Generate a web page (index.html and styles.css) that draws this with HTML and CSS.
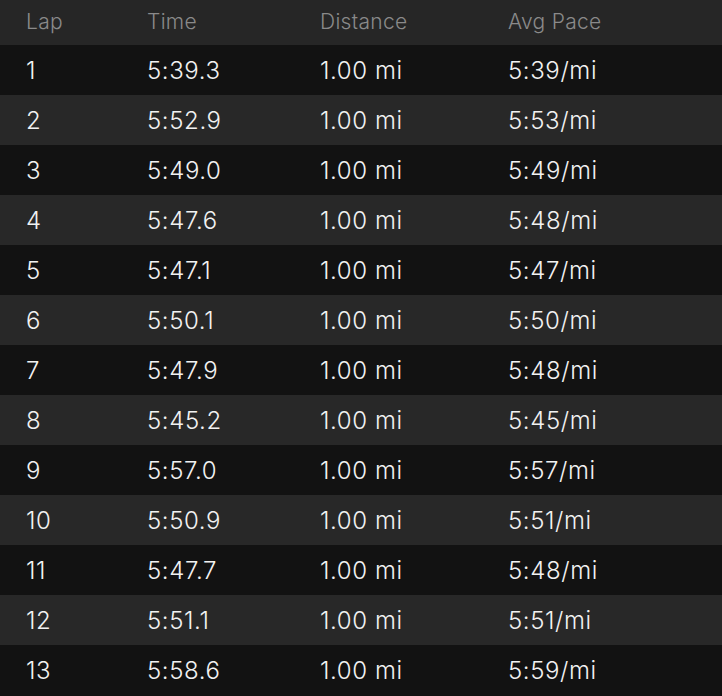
FILE: index.html
```html
<!DOCTYPE html>
<html>
<head>
<meta charset="utf-8">
<link rel="stylesheet" href="styles.css">
</head>
<body>
<div class="table">
  <div class="row head"><span>Lap</span><span>Time</span><span>Distance</span><span>Avg Pace</span></div>
  <div class="row odd"><span>1</span><span>5:39.3</span><span>1.00 mi</span><span>5:39/mi</span></div>
  <div class="row even"><span>2</span><span>5:52.9</span><span>1.00 mi</span><span>5:53/mi</span></div>
  <div class="row odd"><span>3</span><span>5:49.0</span><span>1.00 mi</span><span>5:49/mi</span></div>
  <div class="row even"><span>4</span><span>5:47.6</span><span>1.00 mi</span><span>5:48/mi</span></div>
  <div class="row odd"><span>5</span><span>5:47.1</span><span>1.00 mi</span><span>5:47/mi</span></div>
  <div class="row even"><span>6</span><span>5:50.1</span><span>1.00 mi</span><span>5:50/mi</span></div>
  <div class="row odd"><span>7</span><span>5:47.9</span><span>1.00 mi</span><span>5:48/mi</span></div>
  <div class="row even"><span>8</span><span>5:45.2</span><span>1.00 mi</span><span>5:45/mi</span></div>
  <div class="row odd"><span>9</span><span>5:57.0</span><span>1.00 mi</span><span>5:57/mi</span></div>
  <div class="row even"><span>10</span><span>5:50.9</span><span>1.00 mi</span><span>5:51/mi</span></div>
  <div class="row odd"><span>11</span><span>5:47.7</span><span>1.00 mi</span><span>5:48/mi</span></div>
  <div class="row even"><span>12</span><span>5:51.1</span><span>1.00 mi</span><span>5:51/mi</span></div>
  <div class="row odd"><span>13</span><span>5:58.6</span><span>1.00 mi</span><span>5:59/mi</span></div>
</div>
</body>
</html>
```
FILE: styles.css
```css
html, body {
  margin: 0;
  padding: 0;
  background: #111111;
}
body {
  font-family: Inter, "Noto Sans", sans-serif;
  width: 722px;
  height: 696px;
  overflow: hidden;
}
.table {
  display: flex;
  flex-direction: column;
}
.row {
  display: grid;
  grid-template-columns: 121px 173px 188px 1fr;
  align-items: center;
  padding-left: 26px;
  height: 50px;
  color: #f2f2f2;
  font-size: 24px;
  font-weight: 300;
  letter-spacing: 0.6px;
}
.row.head {
  height: 45px;
  background: #262626;
  color: #8a8a8a;
  font-size: 21px;
  letter-spacing: 0.3px;
  align-items: start;
  padding-top: 9px;
  box-sizing: border-box;
}
.row.odd { background: #121212; }
.row.even { background: #282828; }
```
